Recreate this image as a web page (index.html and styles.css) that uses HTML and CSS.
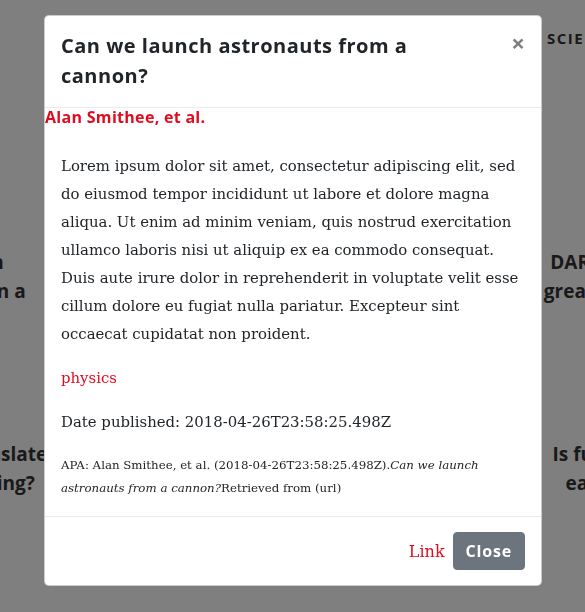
FILE: index.html
```html
<!DOCTYPE html>
<html lang="en">
<head>
<meta charset="utf-8">
<title>Can we launch astronauts from a cannon?</title>
<link rel="stylesheet" href="styles.css">
</head>
<body>
<div class="page">
  <nav class="nav">
    <div class="brand">Ask Science</div>
    <ul class="nav-links">
      <li>SCIENCE</li>
      <li>SPACE</li>
      <li>TECH</li>
    </ul>
  </nav>
  <main class="cards-wrap">
    <div class="cards">
      <article class="card"><h3>Life on Titan<br>in the ocean on a</h3></article>
      <article class="card"><h3>Can we launch astronauts<br>from a cannon?</h3></article>
      <article class="card"><h3>DART: asteroid hits<br>greater than hoped?</h3></article>
      <article class="card"><h3>How can we translate<br>two stars merging?</h3></article>
      <article class="card"><h3>Why is the sky blue<br>on a clear day?</h3></article>
      <article class="card"><h3>Is fusion energy as<br>easy as solar is?</h3></article>
    </div>
  </main>
</div>

<div class="backdrop">
  <div class="modal" role="dialog">
    <div class="modal-header">
      <h5 class="modal-title">Can we launch astronauts from a cannon?</h5>
      <button class="close" type="button" aria-label="Close">×</button>
    </div>
    <h6 class="author">Alan Smithee, et al.</h6>
    <div class="modal-body">
      <p>Lorem ipsum dolor sit amet, consectetur adipiscing elit, sed do eiusmod tempor incididunt ut labore et dolore magna aliqua. Ut enim ad minim veniam, quis nostrud exercitation ullamco laboris nisi ut aliquip ex ea commodo consequat. Duis aute irure dolor in reprehenderit in voluptate velit esse cillum dolore eu fugiat nulla pariatur. Excepteur sint occaecat cupidatat non proident.</p>
      <p class="tag">physics</p>
      <p>Date published: 2018-04-26T23:58:25.498Z</p>
      <p class="apa">APA: Alan Smithee, et al. (2018-04-26T23:58:25.498Z).<em>Can we launch astronauts from a cannon?</em>Retrieved from (url)</p>
    </div>
    <div class="modal-footer">
      <a class="link" href="#">Link</a>
      <button class="btn" type="button">Close</button>
    </div>
  </div>
</div>
</body>
</html>
```
FILE: styles.css
```css
* { box-sizing: border-box; }

html, body {
  margin: 0;
  height: 100%;
  overflow: hidden;
}

body {
  background: #fff;
  color: #333;
  font-family: "Open Sans", sans-serif;
}

/* ---------- page behind the dialog ---------- */
.nav {
  display: flex;
  padding-top: 28px;
}

.brand {
  flex: 0 0 547px;
  padding-left: 90px;
  font-weight: 700;
  font-size: 18px;
  line-height: 20px;
}

.nav-links {
  list-style: none;
  margin: 0;
  padding: 0;
  display: flex;
  gap: 24px;
  font-weight: 700;
  font-size: 15px;
  line-height: 20px;
  letter-spacing: 1.5px;
  white-space: nowrap;
}

.cards-wrap {
  display: flex;
  justify-content: center;
  padding-top: 200px;
}

.cards {
  flex: none;
  width: 1014px;
  display: grid;
  grid-template-columns: repeat(3, 318px);
  column-gap: 30px;
}

.card {
  height: 192px;
  text-align: center;
}

.card h3 {
  margin: 0;
  font-size: 19px;
  line-height: 29px;
  font-weight: 700;
  white-space: nowrap;
}

/* ---------- dialog ---------- */
.backdrop {
  position: fixed;
  inset: 0;
  background: rgba(0, 0, 0, 0.5);
  display: flex;
  justify-content: center;
  align-items: flex-start;
  padding: 15px 0 0 1px;
}

.modal {
  width: 498px;
  background: #fff;
  border: 1px solid rgba(0, 0, 0, 0.2);
  border-radius: 5px;
  color: #212529;
  font-family: "DejaVu Serif", serif;
}

.modal-header {
  display: flex;
  align-items: flex-start;
  padding: 15px 16px 16px;
  border-bottom: 1px solid #e9ecef;
}

.modal-title {
  flex: 1;
  margin: 0 12px 0 0;
  font-family: "Open Sans", sans-serif;
  font-weight: 700;
  font-size: 20px;
  line-height: 30px;
  letter-spacing: 0.5px;
}

.close {
  margin: -15px -16px -16px auto;
  padding: 15px 16px;
  border: 0;
  background: transparent;
  font-family: "Open Sans", sans-serif;
  font-weight: 700;
  font-size: 24px;
  line-height: 1;
  color: #000;
  opacity: 0.5;
  cursor: pointer;
}

.author {
  margin: 0 0 9px;
  font-family: "Open Sans", sans-serif;
  font-weight: 700;
  font-size: 16px;
  line-height: 19px;
  letter-spacing: 0.3px;
  color: #e10b1f;
}

.modal-body {
  padding: 16px;
}

.modal-body p {
  margin: 0 0 16px;
  font-size: 14.9px;
  line-height: 28px;
}

.modal-body .tag {
  color: #e10b1f;
}

.modal-body .apa {
  margin: 0;
  padding-top: 2px;
  font-size: 11.8px;
  line-height: 23px;
}

.modal-footer {
  display: flex;
  justify-content: flex-end;
  align-items: center;
  gap: 8px;
  padding: 15px 16px;
  border-top: 1px solid #e9ecef;
}

.link {
  color: #e10b1f;
  text-decoration: none;
  font-size: 16px;
}

.btn {
  padding: 6px 12px;
  border: 1px solid #6c757d;
  border-radius: 4px;
  background: #6c757d;
  color: #fff;
  font-family: "Open Sans", sans-serif;
  font-weight: 700;
  font-size: 16px;
  line-height: 24px;
  letter-spacing: 0.8px;
}
```
